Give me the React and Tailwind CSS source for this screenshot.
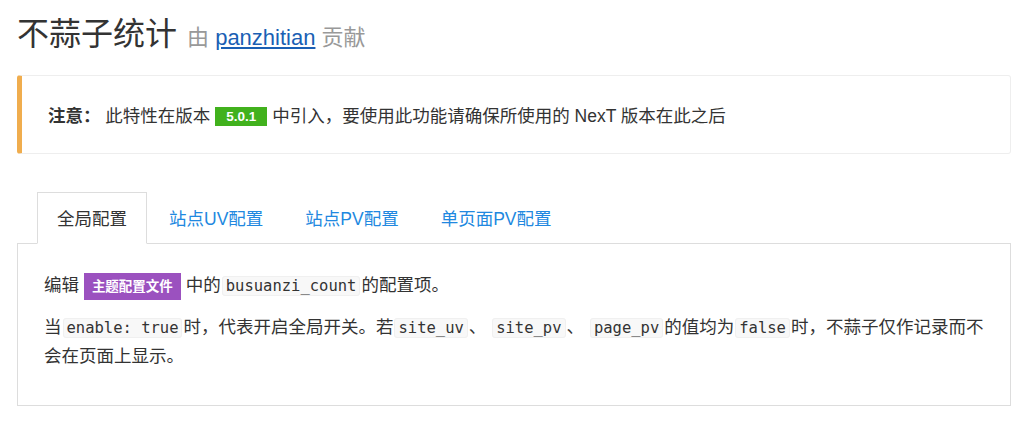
import { useState } from 'react';

const tabs = [
  { id: 'global', label: '全局配置' },
  { id: 'uv', label: '站点UV配置' },
  { id: 'pv', label: '站点PV配置' },
  { id: 'page', label: '单页面PV配置' }
];

function Code({ children }) {
  return (
    <code className="mx-px rounded-[3px] border border-[#f0f0f0] bg-[#f8f8f8] px-[3px] font-['DejaVu_Sans_Mono',monospace] text-[15.5px] text-[#333]">
      {children}
    </code>
  );
}

export default function App() {
  const [activeTab, setActiveTab] = useState('global');

  return (
    <div className="min-h-[425px] bg-white px-[17px] font-['Liberation_Sans','Noto_Sans_CJK_SC',sans-serif] text-[17.5px] text-[#333]">
      <div className="w-[994px]">
        {/* Title */}
        <h1 className="pt-[14px] text-[32px] leading-[40px] font-normal text-[#333]">
          不蒜子统计
          <span className="ml-[10px] text-[22px] text-[#999]">
            由 <a href="#" className="text-[#1a5fb4] underline">panzhitian</a> 贡献
          </span>
        </h1>

        {/* Note */}
        <div className="mt-[17px] rounded-[3px] border border-l-[5px] border-[#eee] border-l-[#f0ad4e] pt-[26px] pb-[23px] pl-[26px] leading-[28px]">
          <strong className="font-bold">注意：</strong> 此特性在版本{' '}
          <span className="inline-block bg-[#41b11d] px-[11px] align-[1px] text-[13.5px] leading-[19px] font-bold text-white">5.0.1</span>{' '}
          中引入，要使用此功能请确保所使用的 NexT 版本在此之后
        </div>

        {/* Tabs */}
        <div className="mt-[38px]">
          <ul className="flex pl-[20px]">
            {tabs.map(tab => (
              <li
                key={tab.id}
                onClick={() => setActiveTab(tab.id)}
                className={`mr-[2px] -mb-px cursor-pointer border px-[19px] pt-[12px] pb-[10px] leading-[28px] ${
                  activeTab === tab.id
                    ? 'border-[#ddd] border-b-white bg-white text-[#333]'
                    : 'border-transparent text-[#2188e0]'
                }`}
              >
                {tab.label}
              </li>
            ))}
          </ul>
          <div className="border border-[#ddd] pt-[27px] pr-[20px] pb-[35px] pl-[26px] leading-[28px]">
            <p>
              编辑{' '}
              <span className="inline-block bg-[#9b51bf] px-[8px] text-[13.5px] leading-[27px] font-bold text-white align-middle">主题配置文件</span>{' '}
              中的<Code>busuanzi_count</Code>的配置项。
            </p>
            <p className="mt-[13px]">
              当<Code>enable: true</Code>时，代表开启全局开关。若<Code>site_uv</Code>、 <Code>site_pv</Code>、 <Code>page_pv</Code>的值均为<Code>false</Code>时，不蒜子仅作记录而不会在页面上显示。
            </p>
          </div>
        </div>
      </div>
    </div>
  );
}
